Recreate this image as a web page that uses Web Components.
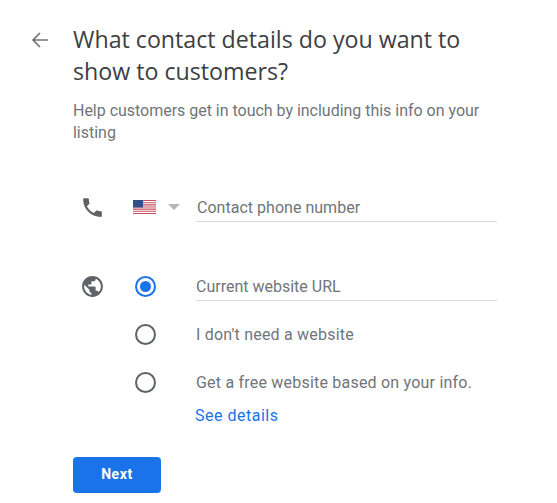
<!DOCTYPE html>
<html>
<head>
<meta charset="utf-8">
<style>
  html, body { margin: 0; background: #fff; }
  body { font-family: Roboto, "Liberation Sans", sans-serif; }
</style>
</head>
<body>
<contact-page></contact-page>
<script>
class pageHeader extends HTMLElement {
  constructor() {
    super();
    this.attachShadow({ mode: 'open' });
    this.shadowRoot.innerHTML = `
    <style>
    :host{
      display: grid;
      grid-template-columns: 73px 424px;
      padding-top: 23px;
    }
    .back{
      padding: 5px 0 0 28px;
    }
    svg{
      display: block;
      width: 24px;
      height: 24px;
      fill: none;
      stroke: #70757a;
      stroke-width: 1.7;
    }
    h1{
      margin: 0;
      font: 400 23.2px/32px "Open Sans", sans-serif;
      letter-spacing: 0;
      color: #3c4043;
    }
    p{
      margin: 13px 0 0;
      font: 400 16px/22px Roboto, sans-serif;
      letter-spacing: -.02px;
      color: #70757a;
    }
    </style>
    <div class="back">
      <svg viewBox="0 0 24 24"><path d="M20 12H5M12 5l-7 7 7 7"/></svg>
    </div>
    <div>
      <h1><slot name="title"></slot></h1>
      <p><slot name="help"></slot></p>
    </div>
    `;
  }
}

class formRow extends HTMLElement {
  constructor() {
    super();
    this.attachShadow({ mode: 'open' });
    this.shadowRoot.innerHTML = `
    <style>
    :host{
      display: grid;
      grid-template-columns: 50px 64px 301px;
      align-items: center;
      padding-left: 82px;
      height: 48px;
    }
    </style>
    <div><slot name="icon"></slot></div>
    <div><slot name="control"></slot></div>
    <div><slot></slot></div>
    `;
  }
}

class textField extends HTMLElement {
  constructor() {
    super();
    this.attachShadow({ mode: 'open' });
    this.shadowRoot.innerHTML = `
    <style>
    :host{
      display: block;
      height: 29px;
      box-sizing: border-box;
      padding-top: 1px;
      border-bottom: 1px solid #dadce0;
      font: 400 16px/28px Roboto, sans-serif;
      letter-spacing: 0;
      color: #70757a;
    }
    </style>
    <slot></slot>
    `;
  }
}

class radioMark extends HTMLElement {
  constructor() {
    super();
    this.attachShadow({ mode: 'open' });
    const on = this.hasAttribute('checked');
    this.shadowRoot.innerHTML = `
    <style>
    :host{
      display: block;
      box-sizing: border-box;
      width: 21px;
      height: 21px;
      margin-left: 3px;
      border-radius: 50%;
      border: 2px solid ${on ? '#1a73e8' : '#5f6368'};
      padding: 3px;
    }
    div{
      width: 100%;
      height: 100%;
      border-radius: 50%;
      background: ${on ? '#1a73e8' : 'transparent'};
    }
    </style>
    <div></div>
    `;
  }
}

class contactPage extends HTMLElement {
  constructor() {
    super();
    this.attachShadow({ mode: 'open' });
    this.shadowRoot.innerHTML = `
    <style>
    :host{
      display: block;
      width: 557px;
      height: 503px;
      overflow: hidden;
      font-family: Roboto, sans-serif;
    }
    .icon{
      display: block;
      width: 25px;
      height: 25px;
      margin-left: -2px;
      fill: #5f6368;
    }
    .phone{
      margin-top: 39px;
    }
    .number{
      padding-left: 1px;
      letter-spacing: .02px;
    }
    .country{
      display: flex;
      align-items: center;
      gap: 12px;
      margin-left: 1px;
    }
    .flag{
      display: block;
      width: 23px;
      height: 14px;
    }
    .caret{
      width: 0;
      height: 0;
      border-left: 6px solid transparent;
      border-right: 6px solid transparent;
      border-top: 6px solid #b4b6b9;
    }
    .sites{
      margin-top: 31px;
    }
    .hint{
      font-size: 16px;
      letter-spacing: .21px;
      color: #70757a;
    }
    a{
      display: block;
      margin: -1px 0 0 195px;
      font-size: 16px;
      line-height: 22px;
      letter-spacing: .5px;
      color: #1a73e8;
      text-decoration: none;
    }
    button{
      display: block;
      margin: 30px 0 0 73px;
      width: 88px;
      height: 36px;
      padding: 0 0 2px;
      border: 0;
      border-radius: 4px;
      background: #1a73e8;
      color: #fff;
      font: 700 14px Roboto, sans-serif;
      letter-spacing: .6px;
    }
    </style>
    <page-header>
      <span slot="title">What contact details do you want to<br>show to customers?</span>
      <span slot="help">Help customers get in touch by including this info on your<br>listing</span>
    </page-header>

    <form-row class="phone">
      <svg slot="icon" class="icon" viewBox="0 0 24 24"><path d="M6.62 10.79c1.44 2.83 3.76 5.14 6.59 6.59l2.2-2.2c.27-.27.67-.36 1.02-.24 1.12.37 2.33.57 3.57.57.55 0 1 .45 1 1V20c0 .55-.45 1-1 1-9.39 0-17-7.61-17-17 0-.55.45-1 1-1h3.5c.55 0 1 .45 1 1 0 1.25.2 2.45.57 3.57.11.35.03.74-.25 1.02l-2.2 2.2z"/></svg>
      <div slot="control" class="country">
        <svg class="flag" viewBox="0 0 23 14">
          <rect width="23" height="14" fill="#fff"/>
          <path fill="#c4505c" d="M0 0h23v1.1H0zM0 2.15h23v1.1H0zM0 4.3h23v1.1H0zM0 6.45h23v1.1H0zM0 8.6h23v1.1H0zM0 10.75h23v1.1H0zM0 12.9h23V14H0z"/>
          <rect width="10" height="7.5" fill="#2f4f8f"/>
        </svg>
        <div class="caret"></div>
      </div>
      <text-field><span class="number">Contact phone number</span></text-field>
    </form-row>

    <form-row class="sites">
      <svg slot="icon" class="icon" viewBox="0 0 24 24"><path d="M12 2C6.48 2 2 6.48 2 12s4.48 10 10 10 10-4.48 10-10S17.52 2 12 2zm-1 17.93c-3.95-.49-7-3.85-7-7.93 0-.62.08-1.21.21-1.79L9 15v1c0 1.1.9 2 2 2v1.93zm6.9-2.54c-.26-.81-1-1.39-1.9-1.39h-1v-3c0-.55-.45-1-1-1H8v-2h2c.55 0 1-.45 1-1V7h2c1.1 0 2-.9 2-2v-.41c2.93 1.19 5 4.06 5 7.41 0 2.08-.8 3.97-2.1 5.39z"/></svg>
      <radio-mark slot="control" checked></radio-mark>
      <text-field>Current website URL</text-field>
    </form-row>
    <form-row>
      <radio-mark slot="control"></radio-mark>
      <span class="hint">I don't need a website</span>
    </form-row>
    <form-row>
      <radio-mark slot="control"></radio-mark>
      <span class="hint">Get a free website based on your info.</span>
    </form-row>
    <a href="#">See details</a>
    <button type="button">Next</button>
    `;
  }
}

customElements.define('page-header', pageHeader);
customElements.define('form-row', formRow);
customElements.define('text-field', textField);
customElements.define('radio-mark', radioMark);
customElements.define('contact-page', contactPage);
</script>
</body>
</html>
